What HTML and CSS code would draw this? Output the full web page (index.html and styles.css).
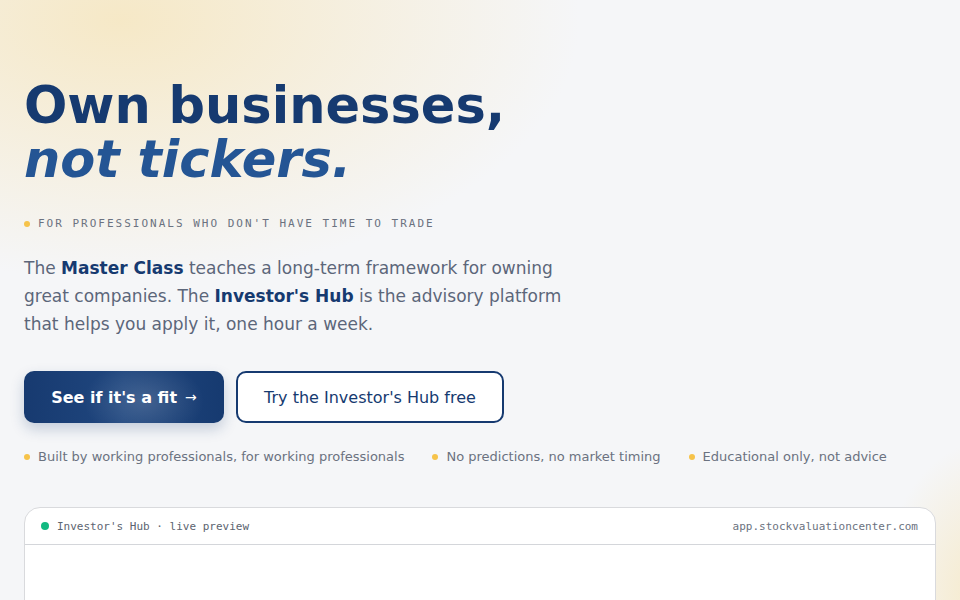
FILE: index.html
```html
<!DOCTYPE html>
<html lang="en">
<head>
<meta charset="utf-8">
<title>Own businesses, not tickers.</title>
<link rel="stylesheet" href="styles.css">
</head>
<body>
<main class="hero">
  <h1 class="title">Own businesses,<br><em>not tickers.</em></h1>
  <p class="eyebrow"><span class="dot"></span>FOR PROFESSIONALS WHO DON'T HAVE TIME TO TRADE</p>
  <p class="lead">The <strong>Master Class</strong> teaches a long-term framework for owning great companies. The <strong>Investor's Hub</strong> is the advisory platform that helps you apply it, one hour a week.</p>
  <div class="actions">
    <a class="btn btn-primary" href="#">See if it's a fit <span class="arrow">&rarr;</span></a>
    <a class="btn btn-outline" href="#">Try the Investor's Hub free</a>
  </div>
  <ul class="checks">
    <li><span class="dot"></span>Built by working professionals, for working professionals</li>
    <li><span class="dot"></span>No predictions, no market timing</li>
    <li><span class="dot"></span>Educational only, not advice</li>
  </ul>
  <section class="preview">
    <header class="preview-bar">
      <span class="status"><span class="live"></span>Investor's Hub · live preview</span>
      <span class="url">app.stockvaluationcenter.com</span>
    </header>
    <div class="preview-body"></div>
  </section>
</main>
</body>
</html>
```
FILE: styles.css
```css
* { box-sizing: border-box; }
html, body { margin: 0; height: 100%; }
body {
  font-family: "DejaVu Sans", sans-serif;
  background:
    radial-gradient(ellipse 460px 260px at 120px 20px, rgba(246, 230, 190, 0.85), rgba(246, 230, 190, 0) 100%),
    radial-gradient(ellipse 110px 160px at 990px 600px, rgba(246, 232, 196, 0.95), rgba(246, 232, 196, 0) 100%),
    #f5f6f8;
  overflow: hidden;
}
.hero {
  padding: 79px 24px 0 24px;
}
.title {
  margin: 0;
  font-size: 51px;
  line-height: 54px;
  font-weight: 700;
  color: #163a70;
  letter-spacing: 0;
}
.title em {
  font-style: italic;
  color: #245594;
}
.eyebrow {
  margin: 30px 0 0 0;
  display: flex;
  align-items: center;
  font-family: "DejaVu Sans Mono", monospace;
  font-size: 11px;
  line-height: 14px;
  letter-spacing: 2px;
  color: #6b7280;
}
.dot {
  display: inline-block;
  width: 6px;
  height: 6px;
  border-radius: 50%;
  background: #f6c34a;
  margin: 0 8px 0 0;
  flex: none;
}
.lead {
  margin: 23px 0 0 0;
  max-width: 560px;
  font-size: 17px;
  line-height: 28px;
  color: #5c667a;
}
.lead strong { color: #163a70; font-weight: 700; }
.actions {
  margin-top: 33px;
  display: flex;
  gap: 12px;
}
.btn {
  display: inline-flex;
  align-items: center;
  justify-content: center;
  height: 52px;
  border-radius: 10px;
  font-size: 16px;
  text-decoration: none;
}
.btn-primary {
  width: 200px;
  color: #fff;
  font-weight: 700;
  background:
    radial-gradient(ellipse 60px 40px at 120px 30px, rgba(255,255,255,0.16), rgba(255,255,255,0)),
    linear-gradient(90deg, #173a70, #20477f 50%, #163a70);
  box-shadow: 0 6px 14px rgba(22, 58, 112, 0.22);
}
.arrow { margin-left: 8px; font-weight: 400; font-size: 14px; }
.btn-outline {
  width: 268px;
  color: #163a70;
  background: #fff;
  border: 2px solid #163a70;
}
.checks {
  list-style: none;
  margin: 26px 0 0 0;
  padding: 0;
  display: flex;
  gap: 28px;
  font-size: 13px;
  color: #6b7280;
}
.checks li { display: flex; align-items: center; }
.checks .dot { width: 6px; height: 6px; margin: 0 8px 0 0; }
.preview {
  margin-top: 43px;
  background: #fff;
  border: 1px solid #d9dadd;
  border-radius: 16px 16px 0 0;
  height: 200px;
  overflow: hidden;
}
.preview-bar {
  height: 37px;
  border-bottom: 1px solid #d4d6da;
  display: flex;
  align-items: center;
  justify-content: space-between;
  padding: 0 17px 0 16px;
  font-family: "DejaVu Sans Mono", monospace;
  font-size: 11px;
  color: #5c6470;
}
.status { display: flex; align-items: center; }
.live {
  width: 8px; height: 8px; border-radius: 50%;
  background: #12b981;
  margin-right: 8px;
}
.url { color: #6b7280; }
```
